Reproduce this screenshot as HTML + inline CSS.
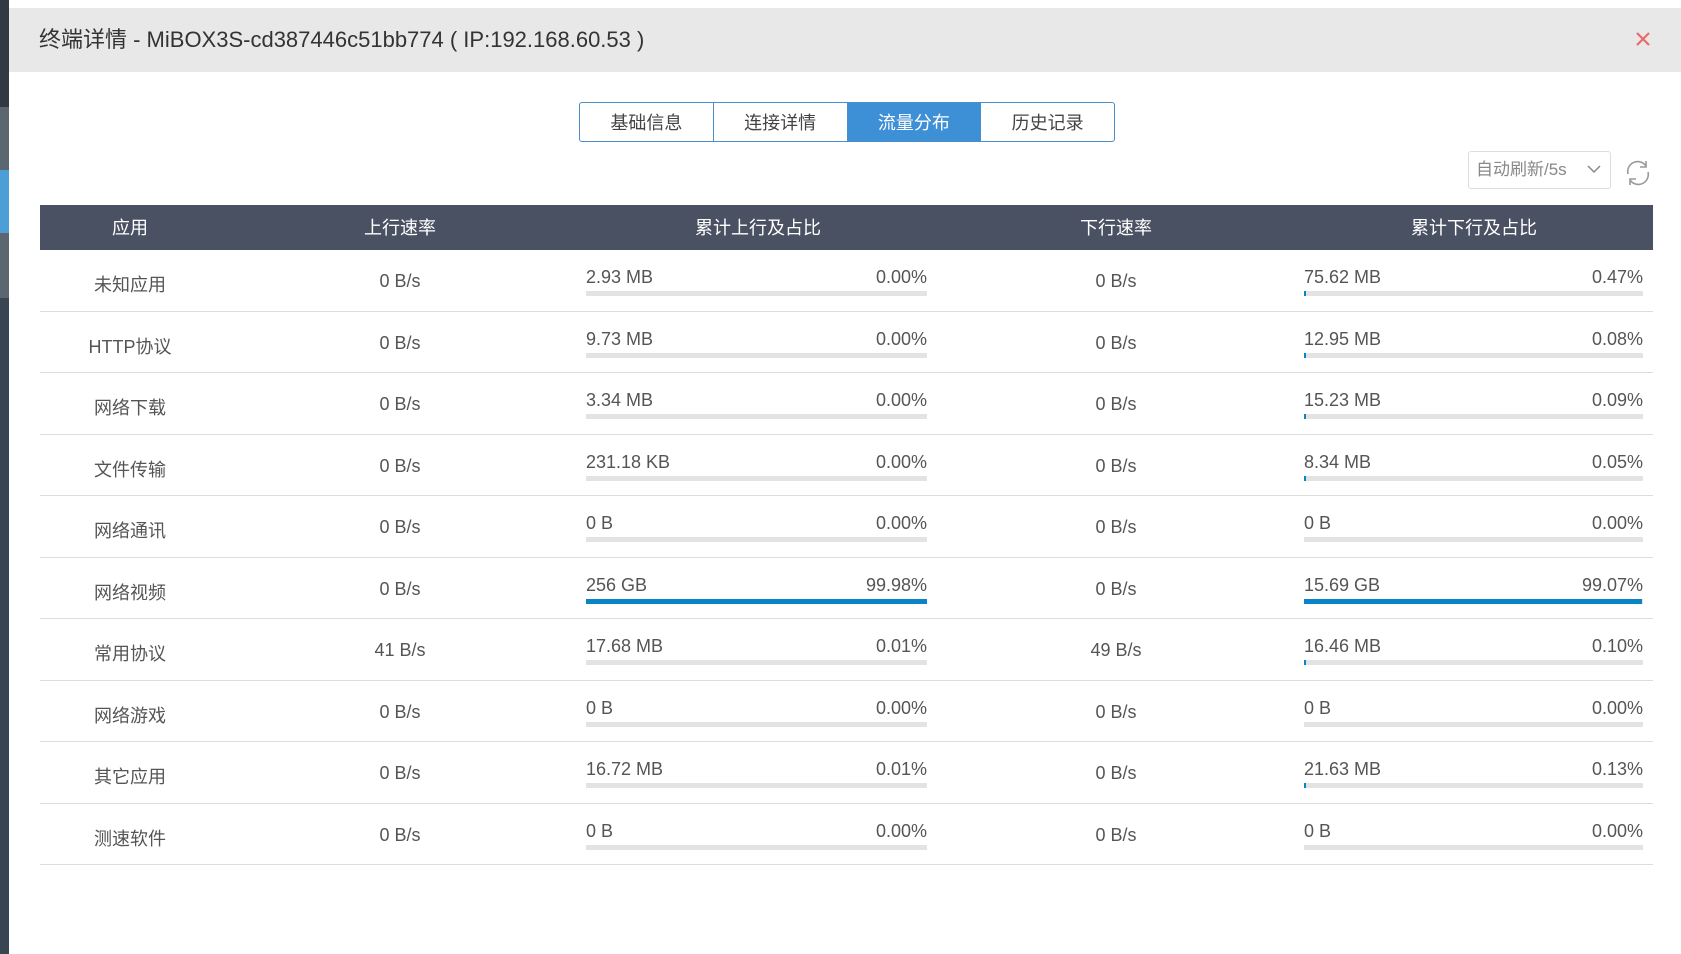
<!DOCTYPE html>
<html><head><meta charset="utf-8"><style>
*{margin:0;padding:0;box-sizing:border-box}
body{width:1681px;height:954px;position:relative;background:#fff;font-family:"Liberation Sans","Noto Sans CJK SC",sans-serif;color:#555;overflow:hidden}
.a{position:absolute}
.hdr{left:9px;top:8px;width:1672px;height:64px;background:#e8e8e8}
.title{left:39px;top:22px;font-size:22px;color:#333;white-space:nowrap}
.tabs{left:579px;top:102px;width:536px;height:40px;border:1px solid #4a8fc9;border-radius:3px;display:flex;overflow:hidden}
.tabs div{flex:1;text-align:center;line-height:40px;font-size:18px;color:#444;border-right:1px solid #4a8fc9}
.tabs div:last-child{border-right:none}
.tabs .on{background:#3d8fd6;color:#fff}
.th{left:40px;top:205px;width:1613px;height:45px;background:#4a5162}
.th span{position:absolute;top:1px;line-height:45px;color:#fff;font-size:18px;transform:translateX(-50%);white-space:nowrap}
.row{position:absolute;left:40px;width:1613px;height:62px;border-bottom:1px solid #ddd}
.c{position:absolute;font-size:18px;transform:translateX(-50%);white-space:nowrap;top:21px}
.bar{position:absolute;height:5px;background:#e3e3e3;top:41px}
.bar i{position:absolute;left:0;top:0;height:5px;background:#0a84c6}
.bl,.br{position:absolute;top:17px;font-size:18px;white-space:nowrap}
</style></head><body>
<div class="a" style="left:0;top:0;width:9px;height:954px;background:#3a4553"></div>
<div class="a" style="left:0;top:0;width:9px;height:107px;background:#303944"></div>
<div class="a" style="left:0;top:107px;width:9px;height:63px;background:#5c6670"></div>
<div class="a" style="left:0;top:170px;width:9px;height:63px;background:#4b9ed6"></div>
<div class="a" style="left:0;top:233px;width:9px;height:65px;background:#5c6670"></div>
<div class="a hdr"></div>
<div class="a title">终端详情 - MiBOX3S-cd387446c51bb774 ( IP:192.168.60.53 )</div>
<svg class="a" style="left:1635px;top:31px" width="16" height="16" viewBox="0 0 16 16"><path d="M2 2L14 14M14 2L2 14" stroke="#e96a6a" stroke-width="2.2"/></svg>
<div class="a tabs"><div>基础信息</div><div>连接详情</div><div class="on">流量分布</div><div>历史记录</div></div>
<div class="a" style="left:1468px;top:151px;width:143px;height:38px;border:1px solid #ddd;border-radius:3px;font-size:17px;color:#888;line-height:36px;padding-left:7px">自动刷新/5s</div>
<svg class="a" style="left:1586px;top:163px" width="16" height="12" viewBox="0 0 16 12"><path d="M2 3L8 9L14 3" stroke="#888" stroke-width="1.5" fill="none"/></svg>
<svg class="a" style="left:1624px;top:159px" width="28" height="28" viewBox="0 0 28 28" fill="none" stroke="#999" stroke-width="1.6"><path d="M4 15A10 10 0 0 1 22 7"/><path d="M22 2V8H16"/><path d="M24 13A10 10 0 0 1 6 21"/><path d="M6 26V20H12"/></svg>
<div class="a th"><span style="left:90px">应用</span><span style="left:360px">上行速率</span><span style="left:718px">累计上行及占比</span><span style="left:1076px">下行速率</span><span style="left:1434px">累计下行及占比</span></div>
<div id="rows"></div>
<script>
var d=[["未知应用","0 B/s","2.93 MB","0.00%",0,"0 B/s","75.62 MB","0.47%",0.47],
["HTTP协议","0 B/s","9.73 MB","0.00%",0,"0 B/s","12.95 MB","0.08%",0.08],
["网络下载","0 B/s","3.34 MB","0.00%",0,"0 B/s","15.23 MB","0.09%",0.09],
["文件传输","0 B/s","231.18 KB","0.00%",0,"0 B/s","8.34 MB","0.05%",0.05],
["网络通讯","0 B/s","0 B","0.00%",0,"0 B/s","0 B","0.00%",0],
["网络视频","0 B/s","256 GB","99.98%",99.98,"0 B/s","15.69 GB","99.07%",99.07],
["常用协议","41 B/s","17.68 MB","0.01%",0.01,"49 B/s","16.46 MB","0.10%",0.10],
["网络游戏","0 B/s","0 B","0.00%",0,"0 B/s","0 B","0.00%",0],
["其它应用","0 B/s","16.72 MB","0.01%",0.01,"0 B/s","21.63 MB","0.13%",0.13],
["测速软件","0 B/s","0 B","0.00%",0,"0 B/s","0 B","0.00%",0]];
var h="";
function w(p){return p<=0?0:Math.max(2,Math.round(341*p/100));}
d.forEach(function(r,i){var t=Math.round(250+i*61.5);
h+='<div class="row" style="top:'+t+'px;height:'+(Math.round(250+(i+1)*61.5)-t)+'px">'+
'<div class="c" style="left:90px">'+r[0]+'</div><div class="c" style="left:360px">'+r[1]+'</div>'+
'<div class="bl" style="left:546px">'+r[2]+'</div><div class="br" style="left:546px;width:341px;text-align:right">'+r[3]+'</div>'+
'<div class="bar" style="left:546px;width:341px"><i style="width:'+(r[4]>0&&r[4]<1?0:w(r[4]))+'px"></i></div>'+
'<div class="c" style="left:1076px">'+r[5]+'</div>'+
'<div class="bl" style="left:1264px">'+r[6]+'</div><div class="br" style="left:1264px;width:339px;text-align:right">'+r[7]+'</div>'+
'<div class="bar" style="left:1264px;width:339px"><i style="width:'+w(r[8])+'px"></i></div></div>';});
document.getElementById("rows").innerHTML=h;
</script>
</body></html>
